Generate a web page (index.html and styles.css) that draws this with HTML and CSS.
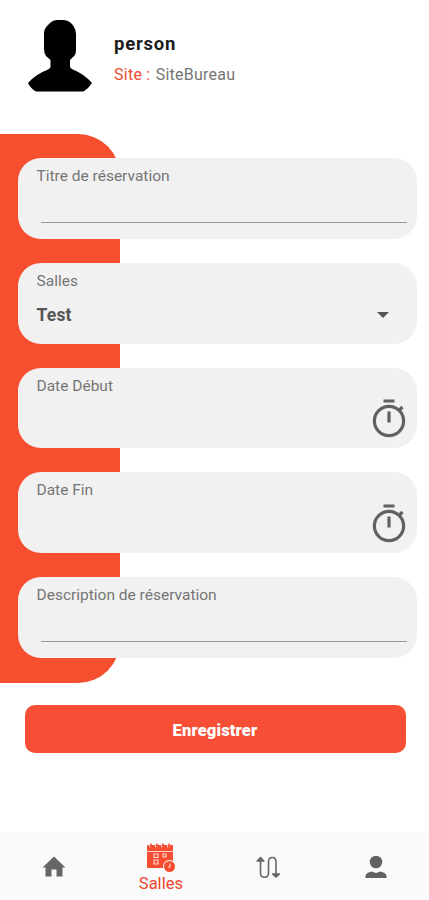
FILE: index.html
```
<!DOCTYPE html>
<html lang="fr">
<head>
<meta charset="utf-8">
<title>Réservation</title>
<link rel="stylesheet" href="styles.css">
</head>
<body>
<header class="profile">
  <svg class="avatar" viewBox="28 20 64 72"><path d="M50 23Q53 20 57 20H63Q68 20 72 24L74 27Q76 30 76 34V50Q76 55 73 57L70 60V67Q71 69 74 70Q84 74 92 83Q89 88 83.500 91.500H36Q31 89 28 83Q36 74 47 70Q50 69 50.500 67V60L46 56Q44 53 44 49V34Q44 29 47 26Z"/></svg>
  <div>
    <h1 class="name">person</h1>
    <p class="site"><span class="site-label">Site :</span> SiteBureau</p>
  </div>
</header>
<main>
  <form class="booking">
    <div class="card"><label class="label">Titre de réservation</label><div class="line"></div></div>
    <div class="card"><label class="label">Salles</label><div class="select"><span>Test</span><i class="caret"></i></div></div>
    <div class="card"><label class="label">Date Début</label>
      <svg class="timer" viewBox="0 0 34 39"><g fill="none" stroke="#616161" stroke-width="3.200"><circle cx="17" cy="22" r="14.600"/><path d="M11.500 2H22.500M17 12.500V23.500M27 11.500L30.500 8"/></g></svg>
    </div>
    <div class="card"><label class="label">Date Fin</label>
      <svg class="timer" viewBox="0 0 34 39"><g fill="none" stroke="#616161" stroke-width="3.200"><circle cx="17" cy="22" r="14.600"/><path d="M11.500 2H22.500M17 12.500V23.500M27 11.500L30.500 8"/></g></svg>
    </div>
    <div class="card"><label class="label">Description de réservation</label><div class="line"></div></div>
  </form>
  <button class="submit" type="button">Enregistrer</button>
</main>
<nav class="tabs">
  <a class="tab"><svg class="home" viewBox="0 0 24 22"><path fill="#666" d="M12 0.500L23.500 11.500H20.500V20.500H14.500V13.500H9.500V20.500H3.500V11.500H0.500Z"/></svg></a>
  <a class="tab active">
    <svg class="calendar" viewBox="0 0 30 30">
      <path fill="#f64c30" d="M1 3Q1 2 2 2H26Q27 2 27 3V24Q27 25 26 25H2Q1 25 1 24Z"/>
      <path stroke="#fbd5cf" stroke-width="1" fill="none" d="M1 8.500H27M3.500 1V4H6M9.500 1V4H12M15.500 1V4H18M21.500 1V4H24"/>
      <path stroke="#f64c30" stroke-width="1.500" d="M5 .5V5M11 .5V5M17 .5V5M23 .5V5"/>
      <g fill="none" stroke="#fbd5cf" stroke-width="1.200"><path d="M8 11H12V14.500H8ZM8 17H12V21H8ZM17 11H20V14H17Z"/></g>
      <circle cx="23.500" cy="23.500" r="6.500" fill="#fafafa"/><circle cx="23.500" cy="23.500" r="5.500" fill="#f64c30"/>
      <path fill="none" stroke="#fbd5cf" stroke-width="1.100" d="M24 20.500V24H22"/>
    </svg>
    <span>Salles</span>
  </a>
  <a class="tab"><svg class="route" viewBox="0 0 24 23"><path fill="none" stroke="#666" stroke-width="1.600" d="M4.500 4V17Q4.500 21.300 8.500 21.300Q12.500 21.300 12.500 17V6Q12.500 1.500 16.300 1.500Q20 1.500 20 6V19"/><path fill="#666" d="M4.500 .5L8.500 4.500V5.800H.5V4.500ZM20 22L24 18.500V17.200H16V18.500Z"/></svg></a>
  <a class="tab"><svg class="user" viewBox="0 0 22 24"><circle cx="11" cy="7" r="6.300" fill="#616161"/><path fill="#616161" d="M.5 23V20.500Q1.500 17.500 6.500 16.500L11 18L15.500 16.500Q20.500 17.500 21.500 20.500V23Z"/></svg></a>
</nav>
</body>
</html>
```
FILE: styles.css
```
* { box-sizing: border-box; }
body {
  margin: 0;
  height: 900px;
  display: flex;
  flex-direction: column;
  background: #fff;
  font-family: Roboto, "Liberation Sans", sans-serif;
  color: #757575;
}
svg { display: block; }
.profile {
  display: flex;
  height: 134.400px;
  padding: 20px 0 0 28px;
  gap: 22px;
}
.avatar { width: 64px; height: 72px; }
.name {
  margin: 13px 0 0;
  font-size: 18.500px;
  line-height: 22px;
  font-weight: 700;
  letter-spacing: .8px;
  color: #1c1c1c;
}
.site {
  margin: 10px 0 0;
  font-size: 16px;
  line-height: 20px;
  letter-spacing: .25px;
}
.site-label { color: #f04a32; margin-right: 1px; }
.booking {
  position: relative;
  height: 549px;
  padding: 24px 12px 0 18px;
  display: flex;
  flex-direction: column;
  gap: 24px;
}
.booking::before {
  content: "";
  position: absolute;
  left: 0;
  top: 0;
  z-index: -1;
  width: 119.500px;
  height: 100%;
  border-radius: 0 42px 42px 0;
  background: #f64f30;
}
.card {
  flex: none;
  height: 80.700px;
  padding: 8px 10.500px 0 18.500px;
  border-radius: 23px;
  background: #f1f1f1;
}
.label {
  display: block;
  font-size: 15.500px;
  line-height: 20px;
}
.line {
  margin: 35.500px 0 0 4px;
  height: 1px;
  background: #999;
}
.select {
  display: flex;
  align-items: center;
  justify-content: space-between;
  height: 24px;
  margin-top: 12px;
  padding-right: 17.500px;
  font-size: 17.500px;
  font-weight: 700;
  letter-spacing: .2px;
  color: #555;
}
.caret {
  border: 6px solid transparent;
  border-top-color: #555;
  border-bottom: 0;
}
.timer {
  width: 34px;
  height: 39px;
  margin: 3.500px 1px 0 auto;
}
.submit {
  display: block;
  width: 381px;
  height: 47.500px;
  padding: 2px 0 0;
  margin: 22px 0 0 24.500px;
  border: 0;
  border-radius: 10px;
  background: #f64f35;
  color: #fff;
  font: 900 16.500px Roboto, sans-serif;
  letter-spacing: .15px;
}
.tabs {
  display: grid;
  grid-template-columns: repeat(4, 1fr);
  height: 68px;
  margin-top: auto;
  background: #fafafa;
}
.tab {
  display: flex;
  flex-direction: column;
  align-items: center;
  padding-top: 24px;
}
.active { padding-top: 11px; color: #f0442e; font-size: 16.500px; line-height: 21px; }
.home { width: 24px; height: 22px; }
.calendar { width: 30px; height: 30px; }
.route { width: 24px; height: 23px; }
.user { width: 22px; height: 24px; margin: -1px 0 0 2px; }
```
